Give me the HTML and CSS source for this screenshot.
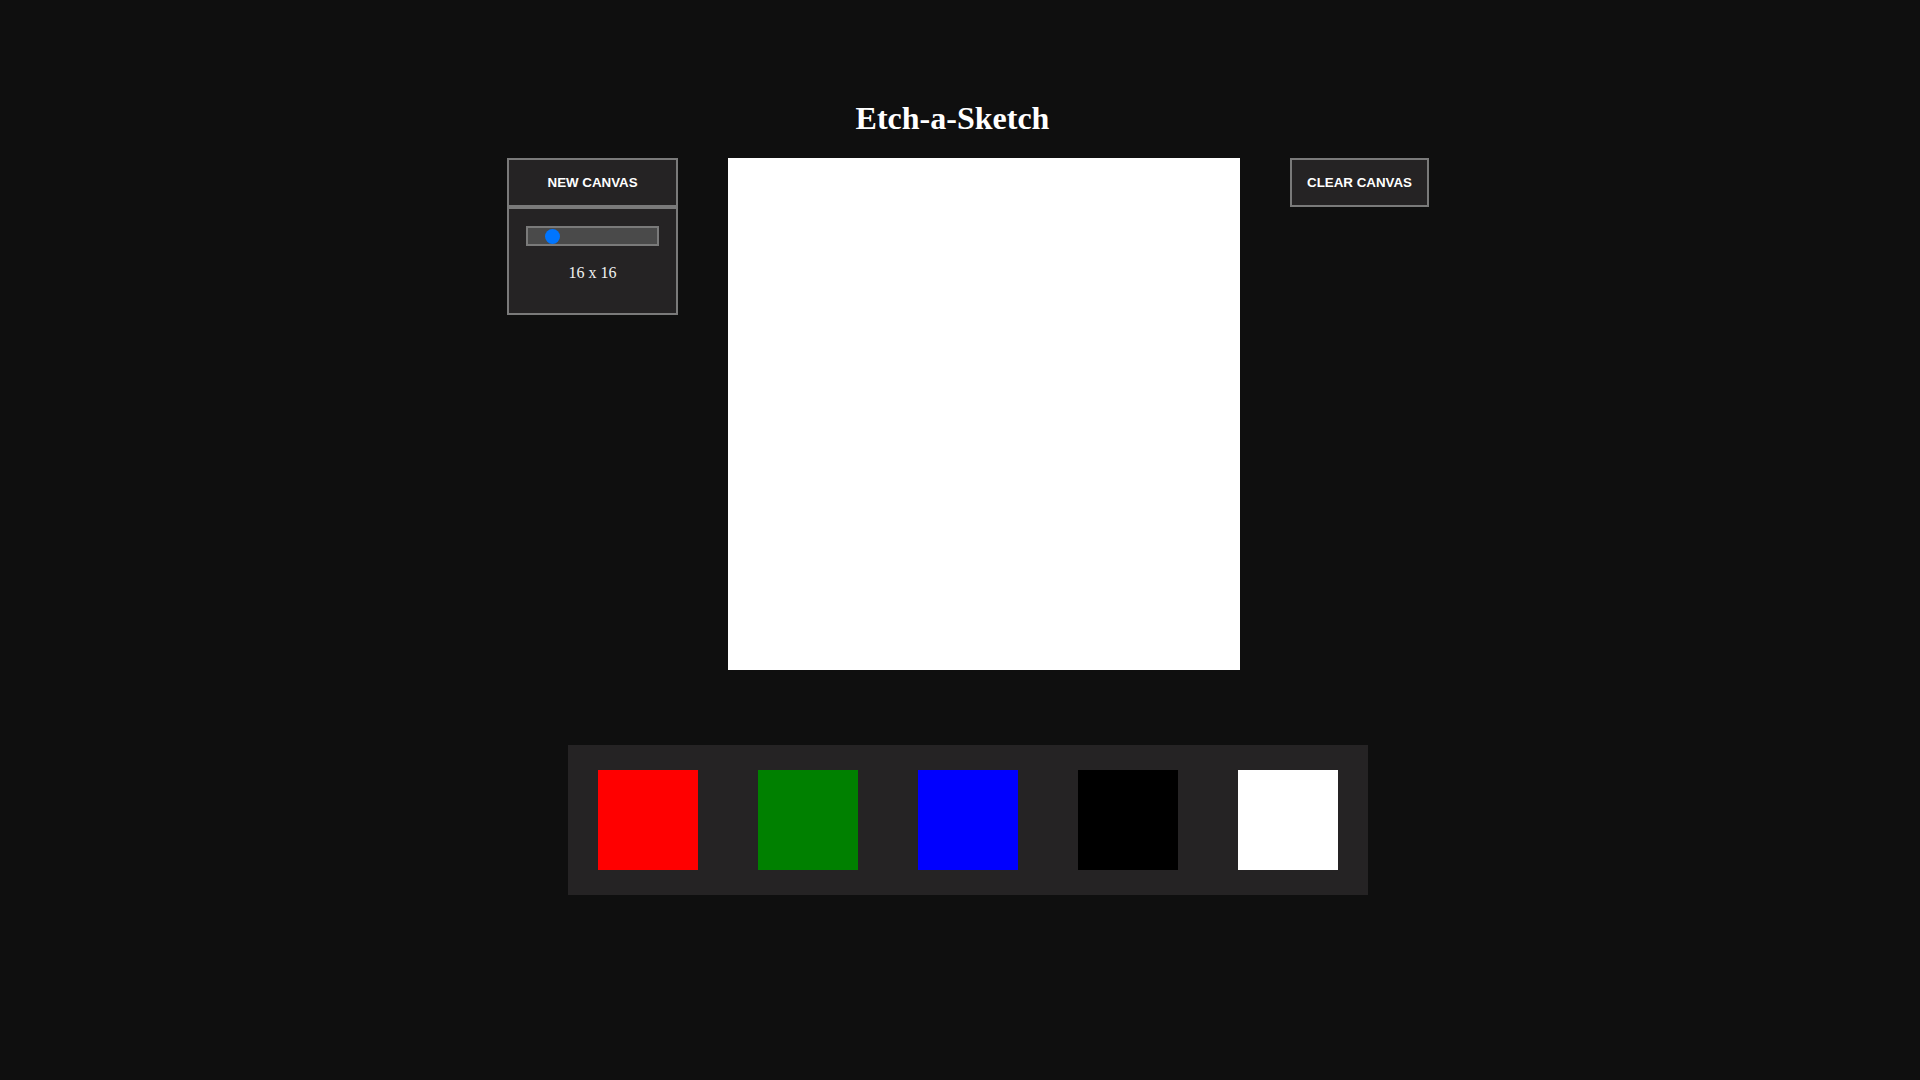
FILE: index.html
```html
<!DOCTYPE html>
<html lang="en">
<head>
<meta charset="utf-8">
<title>Etch-a-Sketch</title>
<link rel="stylesheet" href="styles.css">
</head>
<body>
  <h1 class="title">Etch-a-Sketch</h1>
  <main class="app">
    <div class="workspace">
      <div class="size-panel">
        <button class="btn">New Canvas</button>
        <div class="size-box">
          <input class="size-slider" type="range" min="1" max="100" value="16">
          <p class="size-label">16 x 16</p>
        </div>
      </div>
      <div class="canvas"></div>
      <button class="btn btn-clear">Clear Canvas</button>
    </div>
    <div class="palette">
      <div class="swatch swatch-red"></div>
      <div class="swatch swatch-green"></div>
      <div class="swatch swatch-blue"></div>
      <div class="swatch swatch-black"></div>
      <div class="swatch swatch-white"></div>
    </div>
  </main>
</body>
</html>
```
FILE: styles.css
```css
html {
  background: #0f0f0f;
}

body {
  margin: 8px;
  background: #0f0f0f;
  color: #ffffff;
  font-family: "Liberation Serif", "Times New Roman", serif;
}

.title {
  margin: 92px 15px 21.44px 0;
  font-size: 32px;
  font-weight: bold;
  text-align: center;
  color: #ffffff;
}

.app {
  width: 100vw;
  height: 100vh;
  display: flex;
  flex-direction: column;
  align-items: center;
}

.workspace {
  display: flex;
  justify-content: center;
  align-items: flex-start;
  gap: 50px;
}

.size-panel {
  display: flex;
  flex-direction: column;
}

.btn {
  background: #252324;
  color: #ffffff;
  border: 2px solid #7a7a7a;
  padding: 15px;
  margin: 0;
  font-family: "Liberation Sans", Arial, sans-serif;
  font-size: 13.333px;
  font-weight: bold;
  text-transform: uppercase;
  cursor: pointer;
}

.size-box {
  background: #252324;
  border: 2px solid #7a7a7a;
  padding: 15px;
  text-align: center;
}

.size-slider {
  -webkit-appearance: none;
  appearance: none;
  display: block;
  width: 129px;
  height: 16px;
  margin: 2px;
  background: #4a4a4a;
  border: 2px solid #7a7a7a;
  box-sizing: content-box;
  outline: none;
}

.size-slider::-webkit-slider-thumb {
  -webkit-appearance: none;
  appearance: none;
  width: 15px;
  height: 15px;
  border-radius: 50%;
  background: #0075ff;
  border: none;
}

.size-label {
  margin: 18px 0 16px;
  font-size: 16px;
  line-height: 18px;
  color: #f2f2f2;
}

.canvas {
  width: 512px;
  height: 512px;
  background: #ffffff;
}

.palette {
  margin-top: 75px;
  display: flex;
  gap: 60px;
  padding: 25px 30px;
  background: #252324;
}

.swatch {
  width: 100px;
  height: 100px;
}

.swatch-red { background: #ff0000; }
.swatch-green { background: #008000; }
.swatch-blue { background: #0000ff; }
.swatch-black { background: #000000; }
.swatch-white { background: #ffffff; }
```
